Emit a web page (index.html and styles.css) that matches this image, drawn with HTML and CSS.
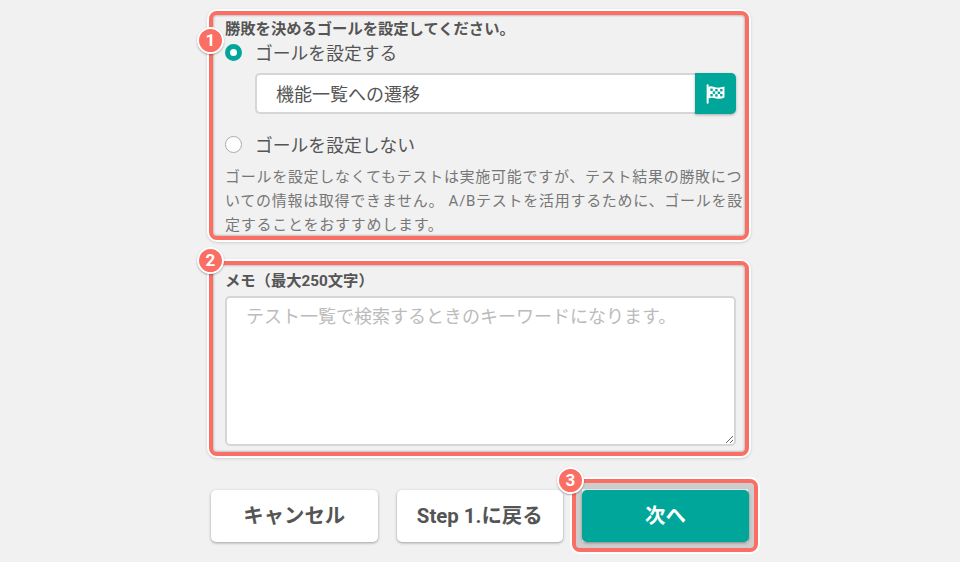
FILE: index.html
```html
<!DOCTYPE html>
<html lang="ja">
<head>
  <meta charset="UTF-8">
  <title>ゴールの設定</title>
  <link rel="stylesheet" href="styles.css">
</head>
<body>

<main class="page">
  <section class="frame goal-frame">
    <span class="badge">1</span>
    <h2 class="field-title">勝敗を決めるゴールを設定してください。</h2>

    <div class="radio-row">
      <span class="radio radio-on"></span>
      <span>ゴールを設定する</span>
    </div>
    <div class="goal-input">
      <div class="goal-name">機能一覧への遷移</div>
      <button class="goal-button" type="button">
        <svg width="19" height="20" viewBox="1 1 17.500 18">
          <rect x="1.6" y="1" width="1.8" height="18" rx="0.9" fill="#fff"/>
          <path d="M3 3.5c3-1.4 5 .2 7.5.6 2.4.4 4.500-.1 7.500-.900v10c-2.500 1.300-5 1.500-7.500 1-2.500-.5-4.500-1.400-7.500 0z" fill="#fff"/>
          <g fill="#00a699">
            <rect x="5" y="5" width="2.200" height="2.200"/>
            <rect x="9.500" y="5.400" width="2.200" height="2.200"/>
            <rect x="14" y="5.400" width="2.200" height="2.200"/>
            <rect x="7.200" y="7.600" width="2.200" height="2.200"/>
            <rect x="11.800" y="7.800" width="2.200" height="2.200"/>
            <rect x="5" y="10" width="2.200" height="2.200"/>
            <rect x="9.500" y="10.200" width="2.200" height="2.200"/>
            <rect x="14" y="10" width="2.200" height="2.200"/>
          </g>
        </svg>
      </button>
    </div>

    <div class="radio-row radio-row-off">
      <span class="radio"></span>
      <span>ゴールを設定しない</span>
    </div>
    <p class="help">ゴールを設定しなくてもテストは実施可能ですが、テスト結果の勝敗についての情報は取得できません。 A/Bテストを活用するために、ゴールを設定することをおすすめします。</p>
  </section>

  <section class="frame memo-frame">
    <span class="badge">2</span>
    <h2 class="field-title">メモ（最大250文字）</h2>
    <textarea class="memo" placeholder="テスト一覧で検索するときのキーワードになります。"></textarea>
  </section>

  <div class="actions">
    <button class="btn" type="button">キャンセル</button>
    <button class="btn" type="button">Step 1.に戻る</button>
    <div class="next-wrap">
      <span class="badge">3</span>
      <button class="btn btn-next" type="button">次へ</button>
    </div>
  </div>
</main>

</body>
</html>
```

FILE: styles.css
```css
* {
  box-sizing: border-box;
}
body {
  margin: 0;
  height: 562px;
  overflow: hidden;
  background-color: #f1f1f1;
  color: #555;
  font-family: Roboto, "Noto Sans CJK JP", sans-serif;
}
.page {
  width: 540px;
  margin-left: 209px;
  padding-top: 11px;
}
.frame {
  position: relative;
  border: 4px solid #fb6e64;
  border-radius: 8px;
  padding: 0 9px 0 12px;
  box-shadow: 0 0 0 2px #fff, 0 1px 3px 2px rgba(0,0,0,0.15), inset 0 0 2px 1px rgba(0,0,0,0.2);
}
.goal-frame {
  height: 229px;
}
.memo-frame {
  height: 195px;
  margin-top: 21px;
}
.badge {
  position: absolute;
  left: -16px;
  top: 12px;
  z-index: 2;
  width: 27px;
  height: 27px;
  border: 2px solid #fff;
  border-radius: 50%;
  background-color: #fb6e64;
  color: #fff;
  font-size: 17px;
  font-weight: 700;
  line-height: 23px;
  text-align: center;
  box-shadow: 0 1px 2px rgba(0,0,0,0.3);
}
.memo-frame .badge {
  left: -16px;
  top: -18px;
}
.field-title {
  margin: 0;
  padding-top: 5px;
  font-size: 15.3px;
  font-weight: 700;
  line-height: 18px;
}
.memo-frame .field-title {
  padding-top: 7px;
}
.radio-row {
  display: flex;
  align-items: center;
  gap: 13px;
  height: 26px;
  margin-top: 1px;
  font-size: 17.8px;
}
.radio-row-off {
  margin-top: 17px;
}
.radio {
  width: 17px;
  height: 17px;
  border: 1px solid #aaa;
  border-radius: 50%;
  background-color: #fff;
}
.radio-on {
  border: 5.500px solid #00a699;
}
.goal-input {
  display: flex;
  height: 41px;
  margin: 8px 0 0 30px;
}
.goal-name {
  flex: 1;
  padding: 1px 0 0 19px;
  border: 2px solid #d6d6d6;
  border-right: 0;
  border-radius: 5px 0 0 5px;
  background-color: #fff;
  font-size: 18px;
  line-height: 38px;
}
.goal-button {
  display: flex;
  align-items: center;
  justify-content: center;
  width: 41px;
  padding: 0;
  border: 0;
  border-radius: 0 5px 5px 0;
  background-color: #00a699;
  box-shadow: 0 1px 3px rgba(0,0,0,0.3);
}
.help {
  margin: 8px -8px 0 0;
  color: #777;
  font-size: 15px;
  letter-spacing: 0.72px;
  line-height: 24px;
}
.memo {
  display: block;
  width: 100%;
  height: 150px;
  margin-top: 6px;
  padding: 6px 19px;
  border: 2px solid #d6d6d6;
  border-radius: 5px;
  background-color: #fff;
  font-family: inherit;
  font-size: 18px;
  line-height: 26px;
}
.memo::placeholder {
  color: #bbb;
}
.actions {
  display: flex;
  gap: 19px;
  margin: 34px 0 0 2px;
}
.btn {
  width: 167px;
  height: 52px;
  padding: 0 0 4px;
  border: 0;
  border-radius: 5px;
  background-color: #fff;
  color: #555;
  font-family: inherit;
  font-size: 20.4px;
  font-weight: 700;
  box-shadow: 0 1px 3px rgba(0,0,0,0.35);
}
.next-wrap {
  position: relative;
}
.next-wrap::after {
  content: "";
  position: absolute;
  inset: -11px -9px -10px -10px;
  border: 4px solid #fb6e64;
  border-radius: 8px;
  box-shadow: 0 0 0 2px #fff, inset 0 0 0 6px #cdcdcd;
  pointer-events: none;
}
.next-wrap .badge {
  left: -25px;
  top: -23px;
}
.btn-next {
  position: relative;
  z-index: 1;
  background-color: #00a699;
  color: #fff;
}
```
